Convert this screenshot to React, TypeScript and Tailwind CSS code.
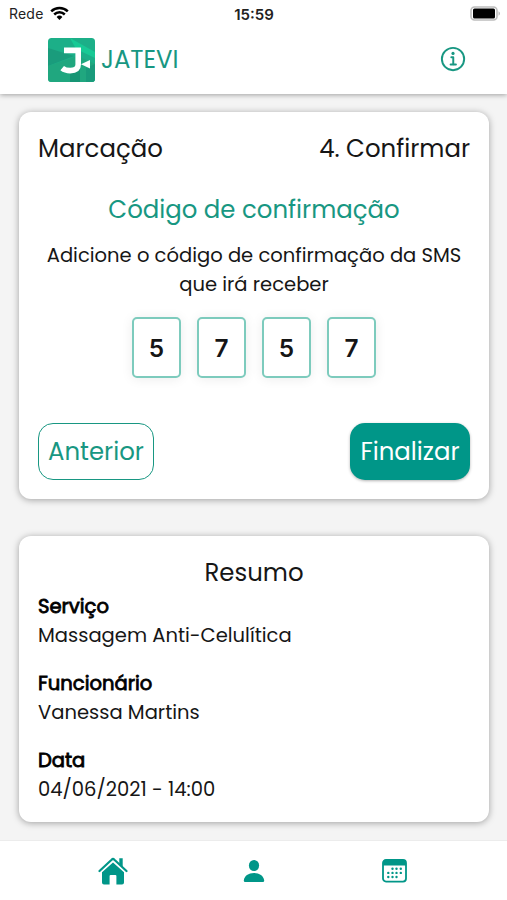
import { IoInformationCircleOutline } from "react-icons/io5";

const CODE = ["5", "7", "5", "7"];

const SUMMARY = [
  { label: "Serviço", value: "Massagem Anti-Celulítica" },
  { label: "Funcionário", value: "Vanessa Martins" },
  { label: "Data", value: "04/06/2021 - 14:00" },
];

const CALENDAR_DOTS = [
  [10.5, 9.8], [14.5, 9.8], [18.8, 9.8],
  [6.3, 13.9], [10.5, 13.9], [14.5, 13.9], [18.8, 13.9],
  [6.3, 18], [10.5, 18], [14.5, 18],
];

function StatusBar() {
  return (
    <div className="grid h-7 grid-cols-3 items-center pl-[9px] pr-[6px] font-['Inter',sans-serif] text-[14px] leading-none text-[#222]">
      <div className="flex items-center gap-[6px]">
        <span className="tracking-[0.2px]">Rede</span>
        <svg className="mb-[2px]" width="19" height="15" viewBox="0 0 19 15" fill="none" stroke="#000" strokeWidth="2.5">
          <path d="M1.2 5.4a12 12 0 0 1 16.6 0M4.2 8.5a7.6 7.6 0 0 1 10.6 0" />
          <path d="M6.6 10.9a4.2 4.2 0 0 1 5.8 0L9.5 14z" fill="#000" stroke="none" />
        </svg>
      </div>
      <span className="-ml-[2px] text-center text-[15px] font-semibold">15:59</span>
      <svg className="mb-[2px] justify-self-end" width="31" height="15" viewBox="0 0 31 15">
        <rect x="1" y="1" width="26" height="13" rx="3.5" fill="#fff" stroke="#bdbdbd" strokeWidth="1.6" />
        <rect x="3" y="2.500" width="22" height="10" rx="1.5" fill="#000" />
        <path d="M28.6 5.3c1.6.8 1.6 3.6 0 4.4z" fill="#aaa" />
      </svg>
    </div>
  );
}

function Logo() {
  return (
    <svg width="47" height="44" viewBox="0 0 47 44">
      <defs>
        <clipPath id="logo-clip">
          <rect width="47" height="44" rx="3.5" />
        </clipPath>
      </defs>
      <g clipPath="url(#logo-clip)">
        <rect width="47" height="44" fill="#1caf88" />
        <path d="M0 10L26 18L0 28z" fill="#1a9c7c" />
        <path d="M22 0L47 14V20L28 11z" fill="#18c995" />
        <path d="M0 28L30 18L47 26V44H0z" fill="#20a77f" />
        <path d="M22 44V34L32 30V44z" fill="#179574" />
        <path d="M38 44V30L47 26V44z" fill="#199b7b" />
      </g>
      <path d="M16 12.400h14.200v14.200q0 6-8 6-5 0-8-2.500" fill="none" stroke="#fff" strokeWidth="5.6" />
      <path d="M33 26.2l9-4.3v8.6z" fill="#fff" />
    </svg>
  );
}

function HomeIcon() {
  return (
    <svg width="30" height="28" viewBox="0 0 30 28">
      <path d="M1.5 14L13.6 2.700a2 2 0 0 1 2.8 0L28.500 14" fill="none" stroke="currentColor" strokeWidth="2.2" strokeLinecap="round" />
      <path d="M21.3 1.2h3.400v8.9l-3.400-3z" fill="currentColor" />
      <path d="M15 5.4L26 15.300v10.1a2 2 0 0 1-2 2h-5.600v-8.500a1 1 0 0 0-1-1h-4.800a1 1 0 0 0-1 1v8.500H6a2 2 0 0 1-2-2V15.300z" fill="currentColor" />
    </svg>
  );
}

function PersonIcon() {
  return (
    <svg width="22" height="24" viewBox="0 0 22 24" fill="currentColor">
      <ellipse cx="11" cy="6.500" rx="5.1" ry="5.600" />
      <path d="M2.200 23a1.400 1.400 0 0 1-1.400-1.600C1.300 17 5.500 14 11 14s9.700 3 10.200 7.400a1.400 1.400 0 0 1-1.400 1.600z" />
    </svg>
  );
}

function CalendarIcon() {
  return (
    <svg width="25" height="24" viewBox="0 0 25 24">
      <rect x="1" y="1" width="23" height="21.600" rx="3" fill="none" stroke="currentColor" strokeWidth="1.8" />
      <path d="M1 6.400V3.5A2.5 2.5 0 0 1 3.5 1h18A2.5 2.5 0 0 1 24 3.500V6.400z" fill="currentColor" />
      {CALENDAR_DOTS.map(([x, y]) => (
        <circle key={`${x}-${y}`} cx={x} cy={y} r="1.2" fill="currentColor" />
      ))}
    </svg>
  );
}

function Header() {
  return (
    <header className="z-10 h-[94px] shrink-0 bg-white shadow-[0_1px_5px_rgba(0,0,0,0.35)]">
      <StatusBar />
      <div className="flex h-[63px] items-center justify-between pl-[48px] pr-[38px]">
        <div className="flex items-center gap-[6px] text-[#189782]">
          <Logo />
          <span className="pt-[2px] text-[24.4px] leading-none">JATEVI</span>
        </div>
        <IoInformationCircleOutline className="size-[31px] text-[#189782]" />
      </div>
    </header>
  );
}

export default function App() {
  return (
    <div className="flex h-[900px] w-[507px] flex-col bg-[#f4f4f4] font-['Poppins','Inter',sans-serif] text-[#161616]">
      <Header />

      <main className="flex flex-1 flex-col gap-[37px] pl-[19px] pr-[18px] pt-[18px]">
        <section className="flex h-[387px] flex-col rounded-[12px] bg-white px-[19px] pt-[19px] shadow-[0_1px_7px_rgba(0,0,0,0.35)]">
          <div className="flex justify-between text-[24.4px] leading-[36px]">
            <h1>Marcação</h1>
            <h2>4. Confirmar</h2>
          </div>
          <h3 className="mt-[25px] text-center text-[24.4px] leading-[36px] text-[#189782]">
            Código de confirmação
          </h3>
          <p className="mt-[13px] text-center text-[19.55px] leading-[29px]">
            Adicione o código de confirmação da SMS
            <br />
            que irá receber
          </p>
          <div className="mt-[18px] flex justify-center gap-4">
            {CODE.map((digit, i) => (
              <div
                key={i}
                className="flex h-[61px] w-[49px] items-center justify-center rounded-[5px] border-2 border-[#7dcbbd] bg-white pt-px font-['Inter',sans-serif] text-[24.4px] font-semibold shadow-[0_1px_12px_rgba(0,0,0,0.08)]"
              >
                {digit}
              </div>
            ))}
          </div>
          <div className="mt-[45px] flex justify-between text-[24.4px]">
            <button className="h-[57px] w-[116px] rounded-[15px] border border-[#189782] pt-px text-[#189782]">
              Anterior
            </button>
            <button className="h-[57px] w-[120px] rounded-[15px] bg-[#009688] pt-px text-white shadow-[0_1px_3px_rgba(0,0,0,0.3)]">
              Finalizar
            </button>
          </div>
        </section>

        <section className="h-[286px] rounded-[12px] bg-white px-[19px] pt-[19px] shadow-[0_1px_7px_rgba(0,0,0,0.35)]">
          <h2 className="text-center text-[24.4px] leading-[36px]">Resumo</h2>
          <dl className="mt-px flex flex-col gap-[19px] text-[19.55px] leading-[29px]">
            {SUMMARY.map((item) => (
              <div key={item.label}>
                <dt className="text-black [-webkit-text-stroke:0.8px_#000]">{item.label}</dt>
                <dd>{item.value}</dd>
              </div>
            ))}
          </dl>
        </section>
      </main>

      <nav className="grid h-[60px] shrink-0 grid-cols-3 place-items-center border-t border-[#ececec] bg-white px-[42px] text-[#009688]">
        <HomeIcon />
        <PersonIcon />
        <CalendarIcon />
      </nav>
    </div>
  );
}
